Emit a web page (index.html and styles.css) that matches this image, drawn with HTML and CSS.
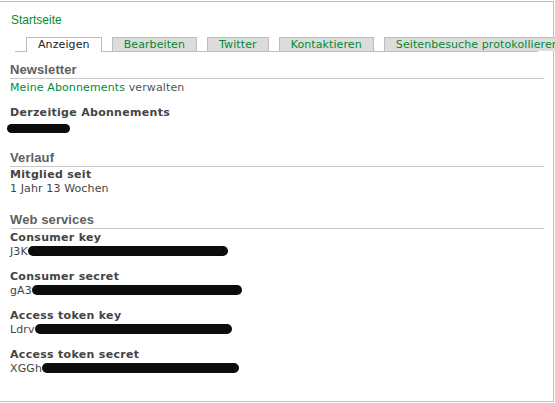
FILE: index.html
```html
<!DOCTYPE html>
<html lang="de">
<head>
<meta charset="utf-8">
<title>Startseite</title>
<link rel="stylesheet" href="styles.css">
</head>
<body>
<div class="frame">
  <div class="breadcrumb"><a href="#">Startseite</a></div>
  <ul class="tabs">
    <li class="tab active">Anzeigen</li>
    <li class="tab">Bearbeiten</li>
    <li class="tab">Twitter</li>
    <li class="tab">Kontaktieren</li>
    <li class="tab">Seitenbesuche protokollieren</li>
  </ul>

  <h2 class="section first">Newsletter</h2>
  <p class="line"><a href="#">Meine Abonnements</a> verwalten</p>
  <div class="field">
    <div class="label">Derzeitige Abonnements</div>
    <div class="value"><span class="redact lead" style="width:63px"></span></div>
  </div>

  <h2 class="section">Verlauf</h2>
  <div class="field flush">
    <div class="label">Mitglied seit</div>
    <div class="value">1 Jahr 13 Wochen</div>
  </div>

  <h2 class="section">Web services</h2>
  <div class="field tight">
    <div class="label">Consumer key</div>
    <div class="value">J3K<span class="redact" style="width:200px"></span></div>
  </div>
  <div class="field">
    <div class="label">Consumer secret</div>
    <div class="value">gA3<span class="redact" style="width:210px"></span></div>
  </div>
  <div class="field">
    <div class="label">Access token key</div>
    <div class="value">Ldrv<span class="redact" style="width:197px"></span></div>
  </div>
  <div class="field">
    <div class="label">Access token secret</div>
    <div class="value">XGGh<span class="redact" style="width:197px"></span></div>
  </div>
</div>
</body>
</html>
```

FILE: styles.css
```css
html, body {
  margin: 0;
  padding: 0;
  background: #fff;
  overflow: hidden;
}

body {
  font-family: "DejaVu Sans", Verdana, sans-serif;
  font-size: 11px;
  letter-spacing: 0.12px;
  color: #444;
}

a {
  color: #008a32;
  text-decoration: none;
}

.frame {
  box-sizing: border-box;
  width: 554px;
  height: 401px;
  margin-top: 1px;
  border-top: 1px solid #bdbdbd;
  border-right: 1px solid #bdbdbd;
  border-bottom: 1px solid #bdbdbd;
  padding: 0 0 0 10px;
}

.breadcrumb {
  margin-top: 11px;
  margin-left: 1px;
  font-family: "Liberation Sans", Arial, sans-serif;
  font-size: 12px;
  letter-spacing: 0;
  line-height: 14px;
}

.tabs {
  list-style: none;
  margin: 10px 0 0 5px;
  padding: 0 0 0 11px;
  width: 512px;
  display: flex;
  flex-wrap: nowrap;
  gap: 10px;
  border-bottom: 1px solid #bdbdbd;
  height: 14px;
}

.tab {
  flex-shrink: 0;
  box-sizing: border-box;
  height: 14px;
  line-height: 13px;
  padding: 0 11px;
  letter-spacing: 0.1px;
  background: #dcdcdc;
  border: 1px solid #bdbdbd;
  border-bottom: none;
  color: #008a32;
  white-space: nowrap;
}

.tab.active {
  background: #fff;
  color: #222;
  height: 15px;
  padding: 0 11px;
}

.section {
  margin: 16px 0 0 0;
  width: 534px;
  font-family: "Liberation Sans", Arial, sans-serif;
  font-size: 13px;
  letter-spacing: 0.1px;
  line-height: 16px;
  font-weight: bold;
  color: #606060;
  border-bottom: 1px solid #c8c8c8;
}

.section.first {
  margin-top: 10px;
}

.line {
  margin: 1px 0 0 0;
  line-height: 15px;
  color: #555;
}

.field {
  margin-top: 10px;
}

.field.tight {
  margin-top: 1px;
}

.field.flush {
  margin-top: 0;
}

.label {
  font-weight: bold;
  letter-spacing: 0.3px;
  line-height: 15px;
  color: #444;
}

.value {
  line-height: 14px;
  color: #444;
  white-space: nowrap;
}

.redact {
  display: inline-block;
  height: 10px;
  background: #0c0c0c;
  border-radius: 5px;
  margin-left: 0;
  vertical-align: -1px;
}

.redact.lead {
  margin-left: -3px;
  height: 9px;
  vertical-align: -3px;
}
```
